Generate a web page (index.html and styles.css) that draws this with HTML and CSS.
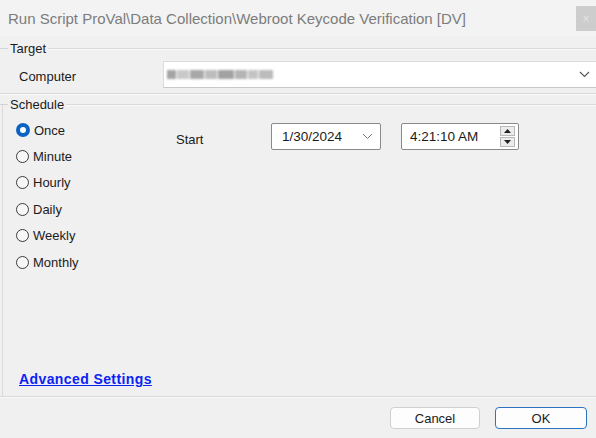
FILE: index.html
```html
<!DOCTYPE html>
<html>
<head>
<meta charset="utf-8">
<link rel="stylesheet" href="styles.css">
</head>
<body>
<div class="window">
  <div class="titlebar">
    <span class="title">Run Script ProVal\Data Collection\Webroot Keycode Verification [DV]</span>
    <span class="close">×</span>
  </div>

  <div class="group-head target-head"><span class="tick"></span><span class="glabel">Target</span><span class="gline"></span></div>
  <div class="computer-row">
    <span class="label">Computer</span>
    <div class="combo">
      <div class="blur">
        <span class="b b1"></span><span class="b b2"></span><span class="b b3"></span><span class="b b4"></span><span class="b b5"></span><span class="b b6"></span><span class="b b7"></span><span class="b b8"></span>
      </div>
      <svg class="chev" width="11" height="7" viewBox="0 0 11 7"><path d="M1 1 L5.5 5.5 L10 1" fill="none" stroke="#555" stroke-width="1.1"/></svg>
    </div>
  </div>
  <div class="sep target-bottom"></div>

  <div class="group-head sched-head"><span class="tick"></span><span class="glabel">Schedule</span><span class="gline"></span></div>
  <div class="sched-body">
    <div class="radios">
      <div class="radio"><span class="dot checked"></span><span>Once</span></div>
      <div class="radio"><span class="dot"></span><span>Minute</span></div>
      <div class="radio"><span class="dot"></span><span>Hourly</span></div>
      <div class="radio"><span class="dot"></span><span>Daily</span></div>
      <div class="radio"><span class="dot"></span><span>Weekly</span></div>
      <div class="radio"><span class="dot"></span><span>Monthly</span></div>
    </div>
    <div class="start-row">
      <span class="start-label">Start</span>
      <div class="date">
        <span>1/30/2024</span>
        <svg class="dchev" width="11" height="7" viewBox="0 0 11 7"><path d="M1 1 L5.5 5.5 L10 1" fill="none" stroke="#777" stroke-width="1"/></svg>
      </div>
      <div class="time">
        <span>4:21:10 AM</span>
        <div class="spin">
          <div class="spin-btn"><svg width="7" height="4" viewBox="0 0 7 4"><path d="M0 4 L3.5 0 L7 4 Z" fill="#222"/></svg></div>
          <div class="spin-btn"><svg width="7" height="4" viewBox="0 0 7 4"><path d="M0 0 L3.5 4 L7 0 Z" fill="#222"/></svg></div>
        </div>
      </div>
    </div>
    <a class="adv" href="#">Advanced Settings</a>
  </div>
  <div class="sep bottom-sep"></div>

  <div class="footer">
    <button class="btn">Cancel</button>
    <button class="btn ok">OK</button>
  </div>
</div>
</body>
</html>
```

FILE: styles.css
```css
html, body {
  margin: 0;
  padding: 0;
  background: #f0f0f0;
  font-family: "Liberation Sans", Arial, sans-serif;
  font-size: 13px;
  color: #1b1b1b;
}
.window {
  width: 596px;
  height: 438px;
  overflow: hidden;
  position: relative;
  background: #f0f0f0;
}
.titlebar {
  height: 36px;
  display: flex;
  align-items: center;
  background: #f3f3f3;
  padding-left: 8px;
}
.title {
  font-size: 15px;
  color: #7c7c7c;
  letter-spacing: 0;
  margin-top: 1px;
}
.close {
  margin-left: auto;
  margin-top: 1px;
  width: 20px;
  height: 25px;
  background: #cdcdcd;
  color: #e4e4e4;
  font-size: 12px;
  display: flex;
  align-items: center;
  justify-content: center;
}
.group-head {
  display: flex;
  align-items: center;
  height: 16px;
}
.target-head { margin-top: 4px; }
.tick {
  width: 8px;
  height: 1px;
  background: #d4d4d4;
  margin-top: 1px;
}
.glabel {
  padding: 0 2px;
}
.gline {
  flex: 1;
  height: 1px;
  background: #d9d9d9;
  box-shadow: 0 1px 0 #fbfbfb;
  margin-top: 1px;
}
.computer-row {
  display: flex;
  align-items: center;
  margin-top: 5px;
  height: 27px;
}
.label {
  margin-left: 19px;
  margin-top: 3px;
  width: 144px;
}
.combo {
  flex: 1;
  height: 27px;
  box-sizing: border-box;
  background: #ffffff;
  border: 1px solid #dcdcdc;
  border-right: none;
  border-bottom-color: #c8c8c8;
  display: flex;
  align-items: center;
  position: relative;
}
.blur {
  display: flex;
  align-items: center;
  margin-left: 3px;
  height: 12px;
  filter: blur(1.2px);
}
.b { display: inline-block; height: 9px; margin-right: 1px; }
.b1 { width: 9px; background: #a4a4a4; }
.b2 { width: 12px; background: #c9c9c9; }
.b3 { width: 14px; background: #a8a8a8; }
.b4 { width: 12px; background: #bdbdbd; }
.b5 { width: 16px; background: #a2a2a2; }
.b6 { width: 12px; background: #b4b4b4; }
.b7 { width: 10px; background: #c4c4c4; }
.b8 { width: 14px; background: #bcbcbc; }
.chev {
  margin-left: auto;
  margin-right: 6px;
}
.sep {
  height: 1px;
  background: #d8d8d8;
  box-shadow: 0 1px 0 #fafafa;
}
.target-bottom { margin-top: 5px; }
.sched-head { margin-top: 2px; }
.sched-body {
  margin-left: 2px;
  border-left: 1px solid #dadada;
  height: 292px;
  margin-top: -8px;
  display: grid;
  grid-template-columns: 170px 1fr;
  grid-template-rows: auto 1fr;
}
.radios {
  padding-top: 13px;
  padding-left: 13px;
  grid-row: 1;
}
.radio {
  display: flex;
  align-items: center;
  height: 26.4px;
}
.dot {
  width: 13px;
  height: 13px;
  border: 1px solid #3a3a3a;
  border-radius: 50%;
  margin-right: 4px;
  box-sizing: border-box;
  background: #f7f7f7;
}
.dot.checked {
  background: #fff;
  border: 4px solid #0a62c4;
  width: 14px;
  height: 14px;
}
.start-row {
  grid-row: 1;
  display: flex;
  align-items: center;
  padding-top: 19px;
  align-self: start;
}
.start-label {
  margin-left: 3px;
  margin-top: 5px;
  width: 95px;
}
.date {
  width: 110px;
  height: 27px;
  box-sizing: border-box;
  background: #fff;
  border: 1px solid #8a8a8a;
  border-radius: 2px;
  display: flex;
  align-items: center;
  padding-left: 10px;
  font-size: 13.5px;
}
.dchev { margin-left: auto; margin-right: 7px; }
.time {
  margin-left: 20px;
  width: 118px;
  height: 27px;
  box-sizing: border-box;
  background: #fff;
  border: 1px solid #8a8a8a;
  border-radius: 2px;
  display: flex;
  align-items: center;
  padding-left: 8px;
  font-size: 13.5px;
}
.spin {
  margin-left: auto;
  margin-right: 3px;
  width: 15px;
  height: 21px;
  display: flex;
  flex-direction: column;
  gap: 1px;
}
.spin-btn {
  flex: 1;
  border: 1px solid #b8b8b8;
  background: #ececec;
  display: flex;
  align-items: center;
  justify-content: center;
}
.adv {
  grid-column: 1 / span 2;
  grid-row: 2;
  align-self: end;
  margin-left: 16px;
  margin-bottom: 9px;
  color: #0b24f5;
  font-weight: bold;
  font-size: 14px;
  letter-spacing: 0.4px;
  text-decoration: underline;
  width: max-content;
}
.footer {
  display: flex;
  justify-content: flex-end;
  gap: 15px;
  padding-right: 9px;
  margin-top: 10px;
}
.btn {
  width: 90px;
  height: 22px;
  font-family: "Liberation Sans", Arial, sans-serif;
  font-size: 13px;
  color: #1b1b1b;
  background: #fdfdfd;
  border: 1px solid #d0d0d0;
  border-radius: 4px;
  padding: 0;
}
.btn.ok {
  width: 92px;
  border: 1px solid #2b74c4;
}
```
